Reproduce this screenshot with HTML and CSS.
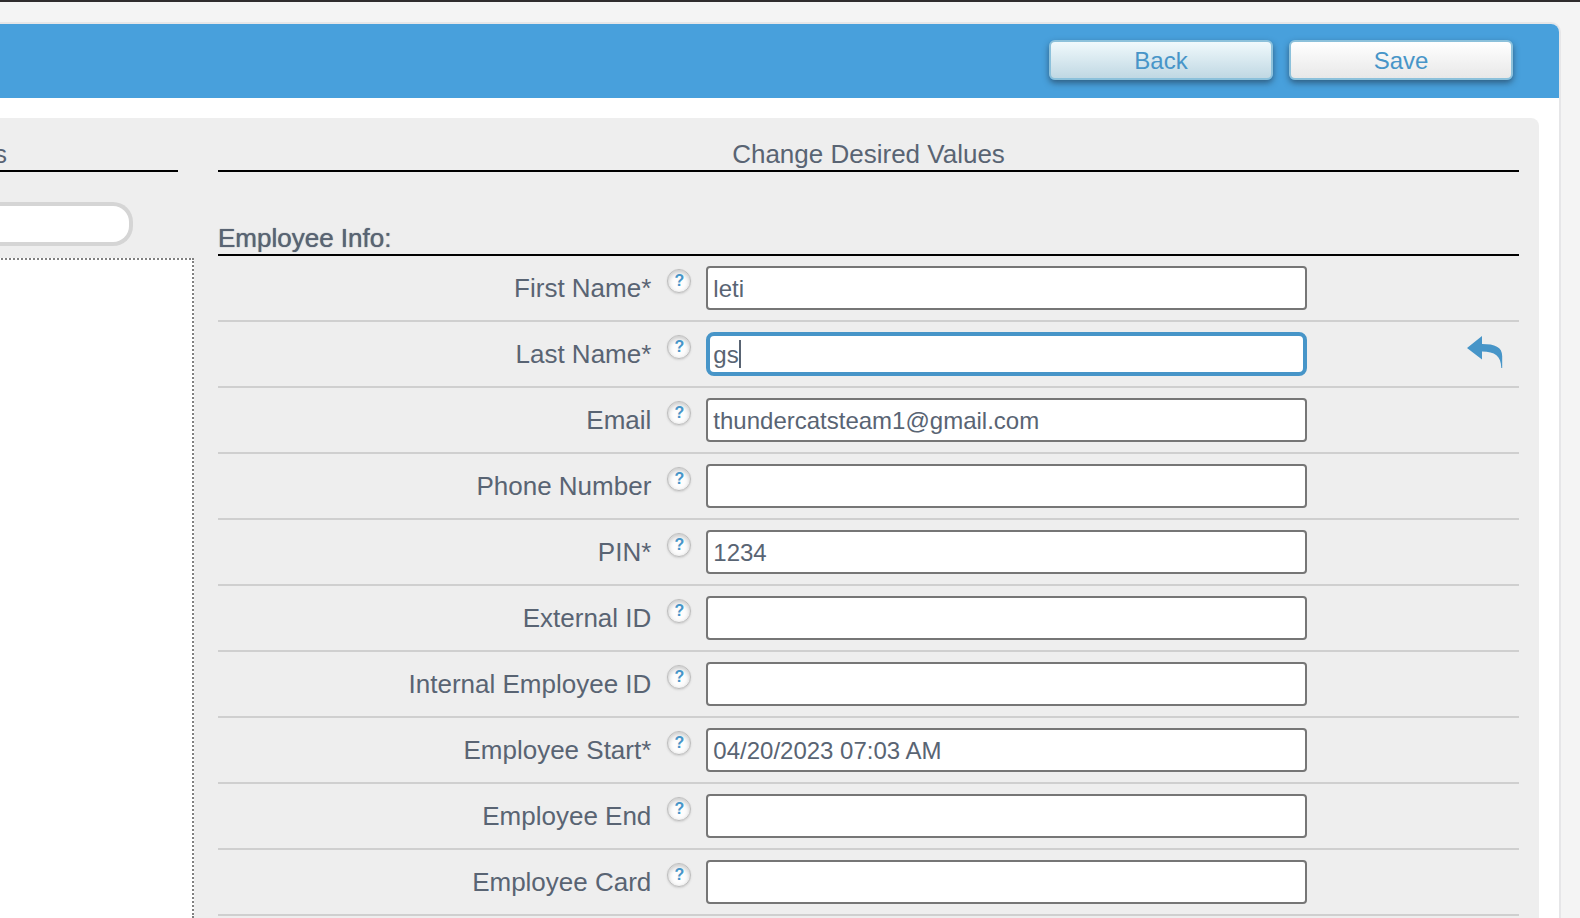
FILE: index.html
```html
<!DOCTYPE html>
<html lang="en">
<head>
<meta charset="utf-8">
<title>Change Desired Values</title>
<link rel="stylesheet" href="styles.css">
</head>
<body>
<svg class="sprite" aria-hidden="true">
  <symbol id="undo" viewBox="0 0 36 32">
    <path d="M0 12 15 0V8C28 8 35.200 11 35.200 20V32H34.300C34 20 28 15.500 15 15.500V23.500Z"/>
  </symbol>
</svg>
<main class="card">
  <header class="toolbar">
    <button class="btn btn-back" type="button">Back</button>
    <button class="btn" type="submit" form="employee">Save</button>
  </header>
  <div class="panel">
    <section class="side">
      <h2 class="heading side-heading">s</h2>
      <input class="search" type="search" aria-label="Search">
      <div class="list"></div>
    </section>
    <form class="values" id="employee">
      <h2 class="heading centered">Change Desired Values</h2>
      <h3 class="heading group">Employee Info:</h3>
      <div class="row">
        <label for="first">First Name*</label><button class="help" type="button" aria-label="Help">?</button>
        <div class="field"><input id="first" type="text" value="leti"></div>
      </div>
      <div class="row">
        <label for="last">Last Name*</label><button class="help" type="button" aria-label="Help">?</button>
        <div class="field"><input class="active" id="last" type="text" value="gs"><span class="caret"></span></div>
        <button class="undo" type="button" aria-label="Undo"><svg width="36" height="32"><use href="#undo"/></svg></button>
      </div>
      <div class="row">
        <label for="email">Email</label><button class="help" type="button" aria-label="Help">?</button>
        <div class="field"><input id="email" type="email" value="thundercatsteam1@gmail.com"></div>
      </div>
      <div class="row">
        <label for="phone">Phone Number</label><button class="help" type="button" aria-label="Help">?</button>
        <div class="field"><input id="phone" type="tel"></div>
      </div>
      <div class="row">
        <label for="pin">PIN*</label><button class="help" type="button" aria-label="Help">?</button>
        <div class="field"><input id="pin" type="text" value="1234"></div>
      </div>
      <div class="row">
        <label for="external">External ID</label><button class="help" type="button" aria-label="Help">?</button>
        <div class="field"><input id="external" type="text"></div>
      </div>
      <div class="row">
        <label for="internal">Internal Employee ID</label><button class="help" type="button" aria-label="Help">?</button>
        <div class="field"><input id="internal" type="text"></div>
      </div>
      <div class="row">
        <label for="start">Employee Start*</label><button class="help" type="button" aria-label="Help">?</button>
        <div class="field"><input id="start" type="text" value="04/20/2023 07:03 AM"></div>
      </div>
      <div class="row">
        <label for="end">Employee End</label><button class="help" type="button" aria-label="Help">?</button>
        <div class="field"><input id="end" type="text"></div>
      </div>
      <div class="row">
        <label for="cardno">Employee Card</label><button class="help" type="button" aria-label="Help">?</button>
        <div class="field"><input id="cardno" type="text"></div>
      </div>
    </form>
  </div>
</main>
</body>
</html>
```
FILE: styles.css
```css
* { box-sizing: border-box; }
body {
  margin: 0;
  height: 100vh;
  overflow: hidden;
  display: flex;
  flex-direction: column;
  padding-top: 20px;
  border-top: 2px solid #2f2c2d;
  background: #f4f4f4;
  color: #596473;
  font-family: "Liberation Sans", Arial, Helvetica, sans-serif;
  font-size: 26px;
  line-height: 30px;
}
.sprite { display: none; }
button, input { font-family: inherit; color: inherit; }
.card {
  flex: 1 0 auto;
  display: flex;
  flex-direction: column;
  margin: 0 19px 0 -6px;
  border: 2px solid #e6e6e8;
  border-width: 2px 2px 0 0;
  border-radius: 0 10px 0 0;
  background: #fff;
}
.toolbar {
  display: flex;
  justify-content: flex-end;
  gap: 16px;
  padding: 16px 46px 18px;
  border-radius: 0 8px 0 0;
  background: #48a0dc;
}
.btn {
  width: 224px;
  height: 40px;
  padding: 2px 0 0;
  border: 2px solid #8cc1db;
  border-radius: 6px;
  background: linear-gradient(#fff, #e8e8e8);
  box-shadow: 0 3px 6px rgba(30, 50, 70, .6);
  color: #4795c8;
  font-size: 24px;
}
.btn-back { background: linear-gradient(#f0f9fc, #c0d8e3); }
.panel {
  flex: 1 0 auto;
  display: flex;
  margin: 20px 20px 0 0;
  padding: 20px 20px 0 0;
  border-radius: 0 8px 0 0;
  background: #eee;
}
.heading {
  margin: 0;
  border-bottom: 2px solid #000;
  font-size: 26px;
  font-weight: 400;
  line-height: 32px;
}
.centered { text-align: center; }
.side {
  width: 200px;
  display: flex;
  flex-direction: column;
  margin-right: 24px;
}
.side-heading { margin-right: 16px; }
.search {
  appearance: none;
  height: 44px;
  margin: 30px 61px 12px 0;
  border: 4px solid #d5d5d5;
  border-left: 0;
  border-radius: 0 20px 20px 0;
  background: #fff;
  font-size: 24px;
}
.list {
  flex: 1;
  border: 2px dotted #808080;
  border-width: 2px 2px 0 0;
  background: #fff;
}
.values { flex: 1; }
.group {
  margin-top: 50px;
  text-shadow: 0 0 1px #596473;
}
.row {
  position: relative;
  display: flex;
  align-items: center;
  height: 66px;
  padding: 10px 0;
  border-bottom: 2px solid #cfcfcf;
}
.row label {
  width: calc(33% + 4px);
  text-align: right;
}
.help {
  align-self: flex-start;
  width: 24px;
  height: 24px;
  margin: 3px 15px 0 16px;
  padding: 0;
  border: 1px solid #bdbdbd;
  border-radius: 50%;
  background: #fdfdfd;
  box-shadow: inset 0 2px 5px #c4c4c4, 0 1px 2px #d0d0d0;
  color: #4795c8;
  font: bold 16px/22px "Liberation Sans", Arial, sans-serif;
}
.field {
  position: relative;
  width: 46%;
  min-width: 601px;
}
.field input {
  display: block;
  width: 100%;
  height: 44px;
  padding: 2px 6px 0 5px;
  border: 2px solid #767676;
  border-radius: 4px;
  background: #fff;
  font-size: 24px;
}
.field .active {
  padding: 2px 4px 0 3px;
  border: 4px solid #4795c8;
  border-radius: 8px;
}
.caret {
  position: absolute;
  left: 33px;
  top: 8px;
  width: 2px;
  height: 28px;
  background: #596473;
}
.undo {
  align-self: flex-start;
  display: flex;
  margin: 4px 16px 0 auto;
  padding: 0;
  border: 0;
  background: none;
  fill: #4795c8;
}
```
